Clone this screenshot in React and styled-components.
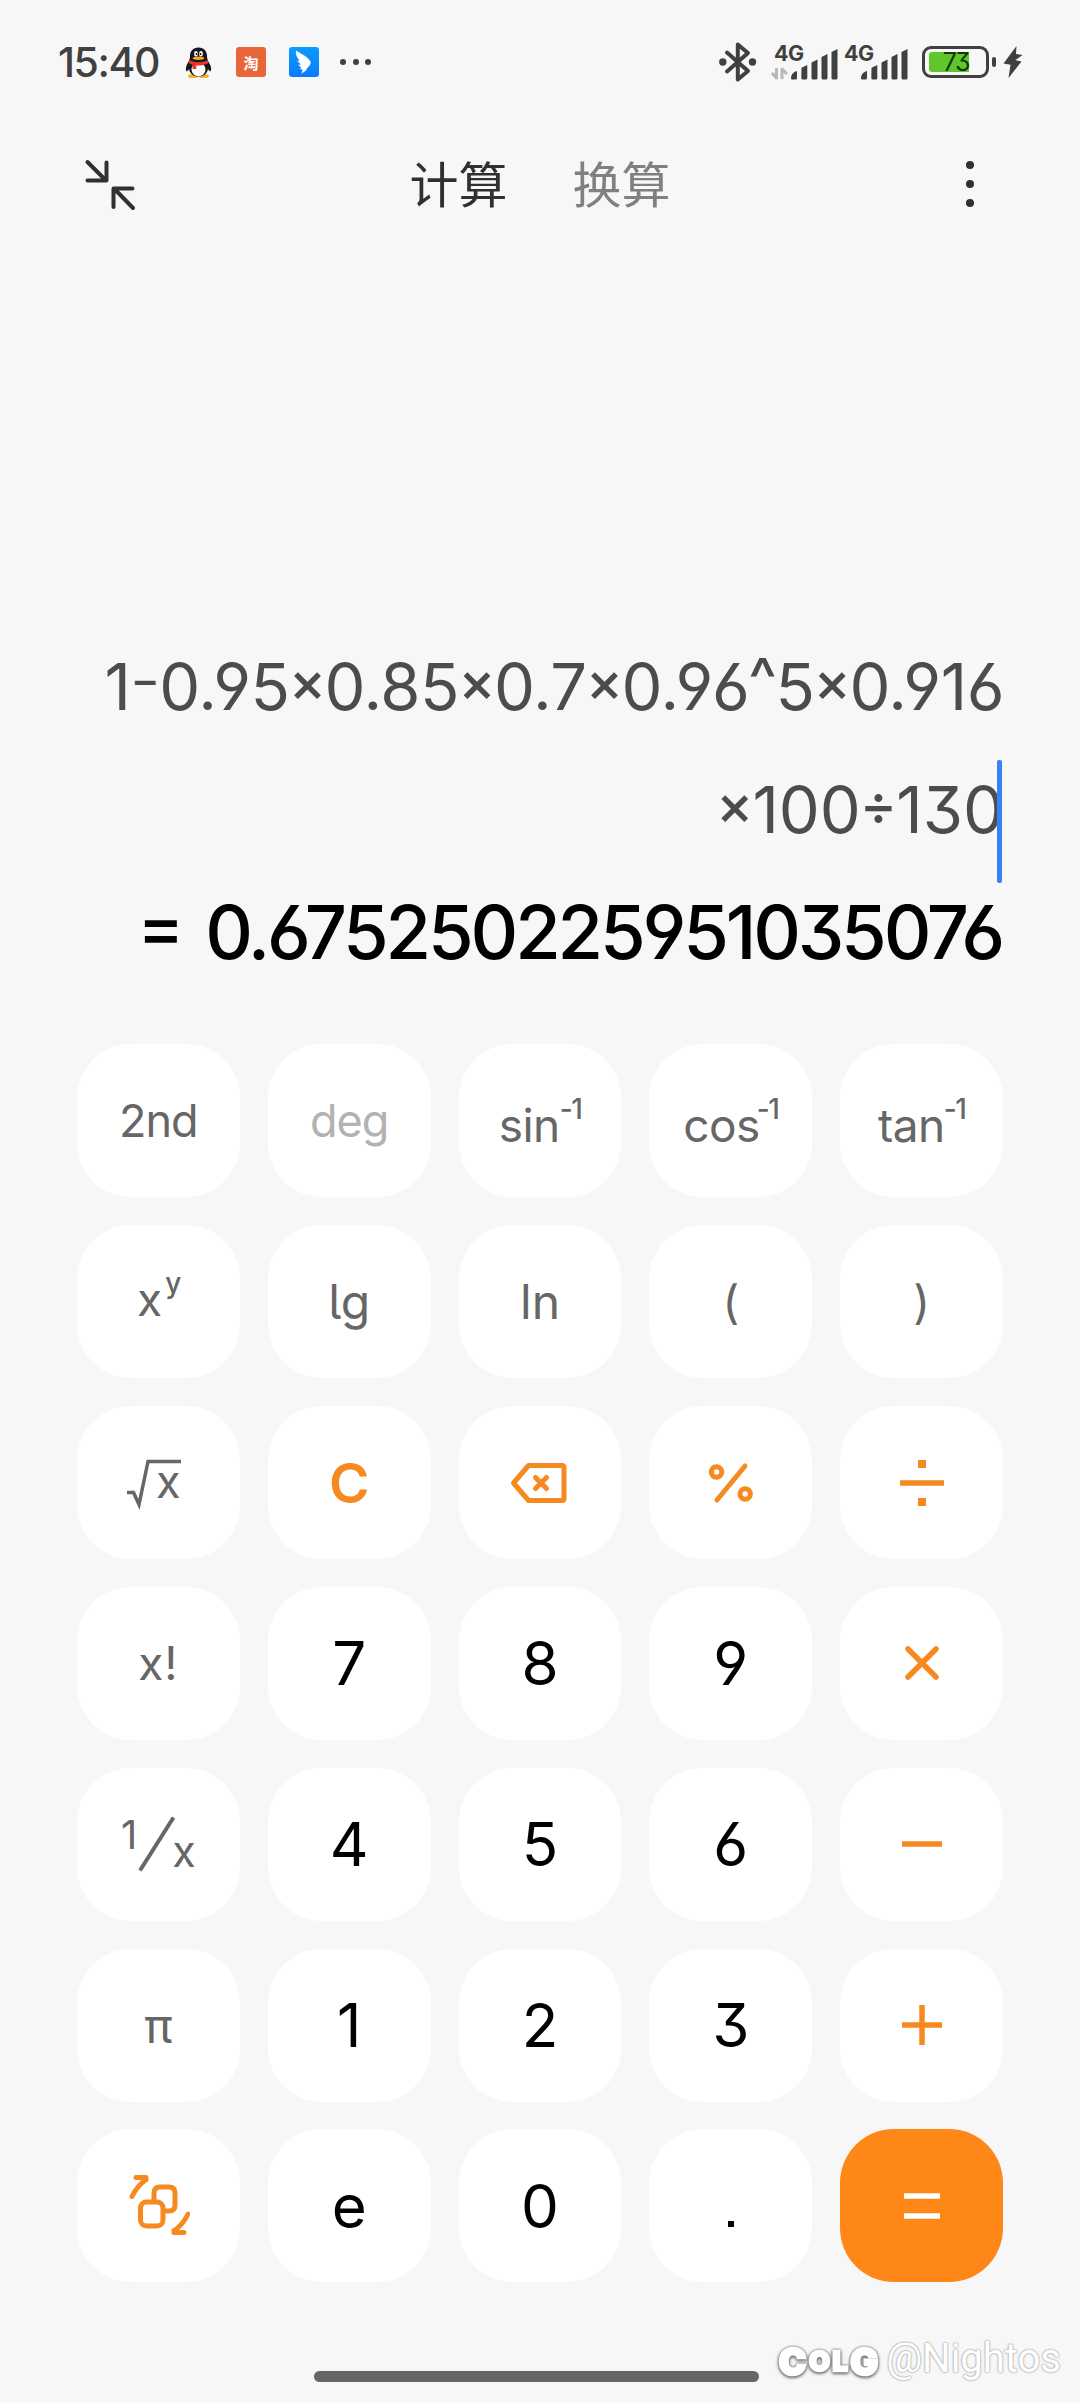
import React from "react";
import styled, { createGlobalStyle } from "styled-components";

const GlobalStyle = createGlobalStyle`
  * {
    box-sizing: border-box;
  }
  body {
    margin: 0;
    background: #f7f7f7;
    font-family: "Inter", "Noto Sans CJK SC", sans-serif;
    /* open six and nine, flat-top three */
    font-feature-settings: "cv03", "cv04", "cv09";
  }
`;

const Screen = styled.main`
  position: relative;
  display: flex;
  flex-direction: column;
  width: 1080px;
  height: 2403px;
  overflow: hidden;
  background: #f7f7f7;
`;

const StatusBar = styled.header`
  display: flex;
  align-items: center;
  justify-content: space-between;
  height: 124px;
  padding: 0 56px 0 58px;
`;

const StatusGroup = styled.div`
  display: flex;
  align-items: center;
`;

const Clock = styled.time`
  width: 127px;
  font-size: 41px;
  line-height: 50px;
  font-weight: 500;
  letter-spacing: -1.4px;
  color: #404040;
`;

const AppBadge = styled.span`
  display: flex;
  align-items: center;
  justify-content: center;
  width: 30px;
  height: 30px;
  margin-left: ${(props) => props.$left}px;
  border-radius: 3px;
  background: ${(props) => props.$bg};
  color: #fff;
  font: 700 15px "Noto Sans CJK SC", sans-serif;
`;

const TopBar = styled.nav`
  display: grid;
  grid-template-columns: 1fr auto 1fr;
  align-items: center;
  height: 120px;
  padding: 0 106px 0 82px;
`;

const Tabs = styled.div`
  display: flex;
  gap: 65px;
  margin: -5px 0 0 24px;
`;

const Tab = styled.span`
  font: 400 49px/60px "Noto Sans CJK SC", sans-serif;
  color: ${(props) => (props.$active ? "#303030" : "#808080")};
`;

const MenuDots = styled.div`
  display: flex;
  flex-direction: column;
  gap: 11px;
  justify-self: end;

  i {
    width: 8px;
    height: 8px;
    border-radius: 50%;
    background: #303030;
  }
`;

const Display = styled.section`
  display: flex;
  flex-direction: column;
  align-items: flex-end;
  height: 800px;
  padding: 381px 78px 0 0;
  white-space: nowrap;
`;

const Expression = styled.div`
  display: flex;
  height: 123px;
  margin-right: ${(props) => props.$shift || 0}px;
  line-height: 123px;
  font-size: 65px;
  letter-spacing: ${(props) => props.$spacing}px;
  color: #4c4c4c;
`;

const Operator = styled.span`
  margin: ${(props) => props.$margin || "0 -1px"};
  padding-bottom: ${(props) => props.$lift || 0}px;
  font-size: ${(props) => props.$size || 56}px;
  font-weight: 500;
  font-feature-settings: "case";
`;

const Caret = styled.span`
  width: 5px;
  height: 123px;
  margin: 12px 0 0 -7px;
  border-radius: 2px;
  background: #3482f5;
`;

const Result = styled.div`
  display: flex;
  height: 122px;
  line-height: 122px;
  font-size: 74px;
  font-weight: 450;
  letter-spacing: -3.2px;
  color: #000;
`;

const EqualSign = styled.span`
  margin-right: 24px;
  font-size: 70px;
  font-feature-settings: "case";
`;

const Keypad = styled.section`
  display: grid;
  grid-template-columns: repeat(5, 1fr);
  grid-template-rows: repeat(7, 1fr);
  gap: 27.8px 28px;
  height: 1238px;
  margin: 0.4px 77px 0;
`;

const Key = styled.button`
  display: flex;
  align-items: center;
  justify-content: center;
  padding: 0;
  border: none;
  border-radius: 54px;
  background: ${(props) => (props.$primary ? "#ff8718" : "#fff")};
  color: ${(props) => props.$color || "#666"};
  font-family: inherit;
  font-feature-settings: inherit;
  font-size: ${(props) => props.$size || 46}px;
  font-weight: ${(props) => props.$weight || 400};
  letter-spacing: ${(props) => props.$spacing || 0}px;
`;

const Power = styled.span`
  display: flex;
  align-items: flex-start;
  line-height: 56px;
  padding-top: ${(props) => props.$drop || 0}px;
  padding-bottom: ${(props) => props.$rise || 0}px;

  sup {
    margin-left: ${(props) => props.$gap || 0}px;
    font-size: 28px;
    font-weight: 500;
    line-height: 24px;
    letter-spacing: -1.5px;
  }
`;

const Tailed = styled.span`
  font-feature-settings: "cv05";
`;

const Root = styled.span`
  display: flex;
  align-items: flex-end;
  height: 56px;
  padding-right: 10px;

  span {
    margin-left: -26px;
    font-size: 45px;
    line-height: 58px;
  }
`;

const Fraction = styled.span`
  display: flex;
  align-items: center;
  height: 70px;
  font-size: 40px;

  svg {
    margin: 0 -4px 0 1px;
  }
  span:first-child {
    padding-bottom: 20px;
  }
  span:last-child {
    padding-top: 14px;
    font-size: 43px;
  }
`;

const Dot = styled.i`
  width: 6px;
  height: 6px;
  margin-top: 37px;
  background: #000;
`;

const HomeBar = styled.div`
  width: 445px;
  height: 11px;
  margin: 88.6px 0 0 314px;
  border-radius: 6px;
  background: #666;
`;

const Watermark = styled.div`
  position: absolute;
  right: 19px;
  bottom: 20px;
  display: flex;
  align-items: center;
  gap: 8px;
  height: 48px;
  color: #fff;
`;

const Brand = styled.span`
  display: flex;
  align-items: center;
  gap: 2.5px;
  padding-top: 5px;
  font: 900 37px/40px "Inter", sans-serif;
  -webkit-text-stroke: 2.5px #fff;
  filter: drop-shadow(0 1px 1.5px #666) drop-shadow(0 0 1px #888);

  small {
    font-size: 27px;
  }
`;

const Handle = styled.span`
  font: 400 40px/46px "Roboto", sans-serif;
  text-shadow: 0 0 2px #aaa, 0 0 2px #aaa, 0 0 1px #bbb;
`;

const Penguin = () => (
  <svg width="27" height="31" viewBox="0 0 27 31">
    <ellipse cx="8" cy="29" rx="5" ry="2" fill="#f8b218" />
    <ellipse cx="19" cy="29" rx="5" ry="2" fill="#f8b218" />
    <path
      d="M13.500 .5C8 .5 5 4.500 5 9c0 3-1 5-2.500 7.500S.300 22.500 1.300 24c.7 1 2-1 2.700-2 .8 5 5 7.500 9.500 7.500s8.700-2.500 9.500-7.500c.7 1 2 3 2.700 2 1-1.500.3-5-1.200-7.500S22 12 22 9c0-4.500-3-8.500-8.500-8.500Z"
      fill="#15171d"
    />
    <ellipse cx="13.500" cy="22.500" rx="7" ry="6.800" fill="#fff" />
    <ellipse cx="11" cy="6.800" rx="1.900" ry="2.800" fill="#fff" />
    <ellipse cx="16" cy="6.800" rx="1.900" ry="2.800" fill="#fff" />
    <circle cx="11.500" cy="7" r=".9" />
    <circle cx="15.500" cy="7" r=".9" />
    <ellipse cx="13.500" cy="11.300" rx="5.800" ry="1.700" fill="#f6a91b" />
    <path
      d="M4.500 13c5 3 13 3 18 0l.8 3.300c-4 2-8 2.500-12 2.200v3.500H7.500v-4.200L3.700 16Z"
      fill="#e7352d"
    />
  </svg>
);

const Wing = () => (
  <svg width="30" height="30" viewBox="0 0 30 30">
    <path
      d="M7 3.500c4 3 10 5 13.500 9.500 1.500 1.500 1.500 3 .5 5l-4 4.500 1 .3-5.500 4 1-4-3-1.500 2-.5-3.500-3 3-.2-4.200-4 3 .3C7.500 10.500 6.500 7 7 3.500Z"
      fill="#fff"
    />
  </svg>
);

const Ellipsis = styled.span`
  display: flex;
  gap: 6.5px;
  margin-left: 21px;

  i {
    width: 6px;
    height: 6px;
    border-radius: 50%;
    background: #404040;
  }
`;

const Bluetooth = () => (
  <svg width="40" height="44" viewBox="0 0 40 44" fill="none">
    <path
      d="M9 12.500 30 31 19.800 39.500V4.500L30 13 9 31.500"
      stroke="#404040"
      strokeWidth="4"
      strokeLinejoin="round"
      strokeLinecap="round"
    />
    <circle cx="4.800" cy="22" r="3.700" fill="#404040" />
    <circle cx="34.500" cy="22" r="3.700" fill="#404040" />
  </svg>
);

const SignalBox = styled.span`
  display: flex;
  flex-direction: column;
  width: ${(props) => props.$width}px;
  height: 36px;
  margin-left: ${(props) => props.$left}px;
  font-size: 21.5px;
  font-weight: 700;
  line-height: 18px;
  letter-spacing: -0.5px;
  color: #404040;

  svg {
    margin-top: -12px;
    flex: none;
  }
`;

const SignalLabel = styled.span`
  padding-left: ${(props) => props.$pad}px;
`;

const Signal = ({ left, active }) => (
  <SignalBox $left={left} $width={active ? 68 : 65}>
    <SignalLabel $pad={active ? 3 : 1}>4G</SignalLabel>
    <svg width="68" height="30" viewBox={active ? "0 0 68 30" : "-2 0 68 30"} overflow="visible">
      {active && (
        <path
          d="M5.500 18v10L1 23M11 29V19l5 5"
          fill="none"
          stroke="#b8b8b8"
          strokeWidth="3"
          strokeLinejoin="round"
        />
      )}
      <g fill="#404040" transform={active ? "translate(20)" : "translate(16)"}>
        <path d="M0 28.500q0-6 6-7.500v7a1.500 1.500 0 0 1-1.500 1.500H1Q0 29.500 0 28.500Z" />
        <path d="M10.500 17.800 16.300 15v13a1.500 1.500 0 0 1-1.500 1.500h-3a1.500 1.500 0 0 1-1.500-1.500Z" />
        <path d="M20.500 12.500 26.500 9.500V28a1.500 1.500 0 0 1-1.500 1.500h-3a1.500 1.500 0 0 1-1.500-1.500Z" />
        <path d="M30.500 7 36.500 4v24a1.500 1.500 0 0 1-1.500 1.500h-3a1.500 1.500 0 0 1-1.500-1.500Z" />
        <path d="M40.500 2 46.500-1v29a1.500 1.500 0 0 1-1.500 1.500h-3a1.500 1.500 0 0 1-1.500-1.500Z" />
      </g>
    </svg>
  </SignalBox>
);

const Battery = styled.span`
  display: flex;
  align-items: center;
  width: 67px;
  height: 32px;
  margin-left: 14px;
  padding: 3px 4px;
  border: 3px solid #404040;
  border-radius: 9px;
`;

const Charge = styled.span`
  display: flex;
  justify-content: flex-end;
  width: 40px;
  height: 20px;
  border-radius: 3px 0 0 3px;
  background: #5fc729;
  font-size: 25px;
  line-height: 20px;
  letter-spacing: -1.5px;
  color: #123806;
`;

const BatteryTip = styled.i`
  width: 4px;
  height: 10px;
  margin: 0 6px 0 3px;
  border-radius: 2px;
  background: #404040;
`;

const Bolt = () => (
  <svg width="22" height="34" viewBox="0 0 22 34">
    <path d="M14.500 1 1.500 18.500l7 1.200L6.500 33 19.500 16.500l-6-1.500 7-5-6.500-1Z" fill="#404040" />
  </svg>
);

const CollapseIcon = () => (
  <svg width="56" height="56" viewBox="0 0 56 56" fill="none">
    <path
      d="M5.500 6 24 24.500M24.500 6.500v18h-19M51 52 32 32.500M31.500 51V32.500h19"
      stroke="#303030"
      strokeWidth="4"
      strokeLinecap="round"
      strokeLinejoin="round"
    />
  </svg>
);

const Glyph = ({ children, size = 64, width = 5.5, cap = "butt" }) => (
  <svg
    width={size}
    height={size}
    viewBox="-32 -32 64 64"
    fill="none"
    stroke="currentColor"
    strokeWidth={width}
    strokeLinecap={cap}
    strokeLinejoin="round"
  >
    {children}
  </svg>
);

const ORANGE = "#f68a20";

const KEYS = [
  { id: "2nd", label: "2nd", size: 45, spacing: -1 },
  { id: "deg", label: "deg", size: 45, color: "#b2b2b2", spacing: -1 },
  { id: "asin", label: <Power $drop={8}>sin<sup>-1</sup></Power>, spacing: -0.5 },
  { id: "acos", label: <Power $drop={8} $gap={-3}>cos<sup>-1</sup></Power>, spacing: -0.5 },
  { id: "atan", label: <Power $drop={8} $gap={-1}>tan<sup>-1</sup></Power>, spacing: -0.5 },
  { id: "pow", label: <Power $rise={6} $gap={3}>x<sup>y</sup></Power> },
  { id: "lg", label: <Tailed>lg</Tailed>, size: 48 },
  { id: "ln", label: "ln", size: 48 },
  { id: "open", label: "(", size: 46 },
  { id: "close", label: ")", size: 46 },
  {
    id: "sqrt",
    label: (
      <Root>
        <svg width="56" height="56" viewBox="0 0 56 56" fill="none">
          <path d="M1 37.500h6.500l5.500 12L22 6.500h33" stroke="#666" strokeWidth="3.500" />
        </svg>
        <span>x</span>
      </Root>
    ),
  },
  { id: "clear", label: "C", size: 55, color: ORANGE, weight: 600 },
  {
    id: "delete",
    color: ORANGE,
    label: (
      <Glyph width={5}>
        <path d="M-11.500-17.500H22q2 0 2 2v31q0 2-2 2h-33.500L-26.500 0Z" />
        <path d="m-4.500-5.500 11 11m0-11-11 11" strokeLinecap="round" />
      </Glyph>
    ),
  },
  {
    id: "percent",
    color: ORANGE,
    label: (
      <Glyph width={5}>
        <circle cx="-14.500" cy="-11" r="5.200" />
        <circle cx="14.200" cy="11" r="5.200" />
        <path d="m-14 17 28-34" strokeLinecap="round" />
      </Glyph>
    ),
  },
  {
    id: "divide",
    color: ORANGE,
    label: (
      <Glyph>
        <path d="M-22 0h44" />
        <path d="M-4-19h8M-4 19h8" strokeWidth="8" />
      </Glyph>
    ),
  },
  { id: "fact", label: "x!", size: 46, spacing: 1 },
  { id: "7", digit: true },
  { id: "8", digit: true },
  { id: "9", digit: true },
  {
    id: "multiply",
    color: ORANGE,
    label: (
      <Glyph cap="round">
        <path d="m-14-14 28 28m0-28-28 28" />
      </Glyph>
    ),
  },
  {
    id: "inverse",
    label: (
      <Fraction>
        <span>1</span>
        <svg width="38" height="56" viewBox="0 0 38 56">
          <path d="M2 54.500 35.500 1.500" stroke="#666" strokeWidth="4" />
        </svg>
        <span>x</span>
      </Fraction>
    ),
  },
  { id: "4", digit: true },
  { id: "5", digit: true },
  { id: "6", digit: true },
  { id: "minus", color: ORANGE, label: <Glyph><path d="M-20 0h40" /></Glyph> },
  { id: "pi", label: "π", size: 47 },
  { id: "1", digit: true },
  { id: "2", digit: true },
  { id: "3", digit: true },
  { id: "plus", color: ORANGE, label: <Glyph><path d="M-20 0h40M0-20v40" /></Glyph> },
  {
    id: "switch",
    color: ORANGE,
    label: (
      <Glyph width={5} cap="round">
        <rect x="-17.500" y="-4" width="22.500" height="24" rx="6" />
        <path d="M-4-4v-9q0-6 6-6h9q6 0 6 6V-1q0 6-6 6H6" strokeLinecap="butt" />
        <path d="M-26-9.500q5-10.500 14-17M-22-28.500h10v2M30 8q-5 10.500-14 17M26 26.500H16v-2" />
      </Glyph>
    ),
  },
  { id: "e", digit: true },
  { id: "0", digit: true },
  { id: "point", label: <Dot /> },
  {
    id: "equals",
    primary: true,
    color: "#fff",
    label: <Glyph><path d="M-18-10h36M-18 10h36" /></Glyph>,
  },
];

const Times = () => <Operator $lift={6}>×</Operator>;

export default function App() {
  return (
    <>
      <GlobalStyle />
      <Screen>
        <StatusBar>
          <StatusGroup>
            <Clock>15:40</Clock>
            <Penguin />
            <AppBadge $left={24} $bg="#e8653a">淘</AppBadge>
            <AppBadge $left={23} $bg="linear-gradient(#0b9bff, #0a7cfb)">
              <Wing />
            </AppBadge>
            <Ellipsis>
              <i />
              <i />
              <i />
            </Ellipsis>
          </StatusGroup>
          <StatusGroup>
            <Bluetooth />
            <Signal left={13} active />
            <Signal left={4} />
            <Battery>
              <Charge>73</Charge>
            </Battery>
            <BatteryTip />
            <Bolt />
          </StatusGroup>
        </StatusBar>

        <TopBar>
          <CollapseIcon />
          <Tabs>
            <Tab $active>计算</Tab>
            <Tab>换算</Tab>
          </Tabs>
          <MenuDots>
            <i />
            <i />
            <i />
          </MenuDots>
        </TopBar>

        <Display>
          <Expression $spacing={-0.45} $shift={-2}>
            1<Operator $size={44} $margin="-3px 0 0 0">−</Operator>0.95
            <Times />
            0.85
            <Times />
            0.7
            <Times />
            0.96
            <Operator $size={60} $margin="-8px -1px 0">^</Operator>5
            <Times />
            0.916
          </Expression>
          <Expression $spacing={0}>
            <Times />
            100
            <Operator $lift={6}>÷</Operator>
            130
            <Caret />
          </Expression>
          <Result>
            <EqualSign>=</EqualSign>0.675250225951035076
          </Result>
        </Display>

        <Keypad>
          {KEYS.map((key) => (
            <Key
              key={key.id}
              $primary={key.primary}
              $color={key.digit ? "#000" : key.color}
              $size={key.digit ? 60 : key.size}
              $weight={key.weight}
              $spacing={key.spacing}
            >
              {key.digit ? key.id : key.label}
            </Key>
          ))}
        </Keypad>

        <HomeBar />
        <Watermark>
          <Brand>
            C<small>O</small>
            <small>L</small>G
          </Brand>
          <Handle>@Nightos</Handle>
        </Watermark>
      </Screen>
    </>
  );
}
